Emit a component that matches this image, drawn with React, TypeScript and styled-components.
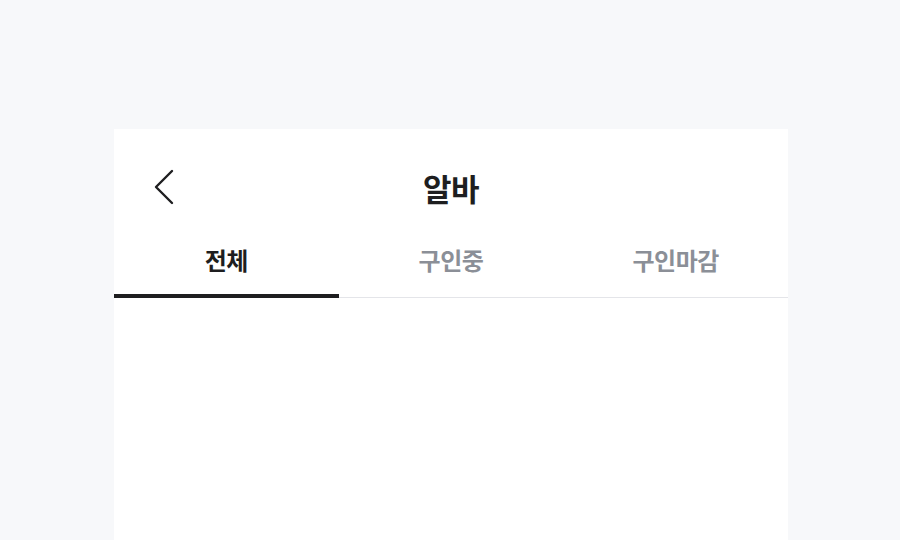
import React, { useState } from "react";
import styled, { createGlobalStyle } from "styled-components";

const Global = createGlobalStyle`
  html, body { margin: 0; padding: 0; background: #f7f8fa; }
  body { font-family: "Noto Sans CJK KR", "Noto Sans", sans-serif; overflow: hidden; }
`;

const Page = styled.div`
  display: flex;
  justify-content: center;
  padding-top: 129px;
  height: 540px;
  box-sizing: border-box;
`;

const Card = styled.div`
  width: 674px;
  margin-left: 2px;
  background: #ffffff;
  display: flex;
  flex-direction: column;
  flex: 0 0 auto;
  align-self: stretch;
`;

const Header = styled.div`
  position: relative;
  height: 72px;
  margin-top: 22px;
  display: flex;
  align-items: center;
  justify-content: center;
`;

const BackButton = styled.button`
  position: absolute;
  left: 32px;
  top: 50%;
  transform: translateY(-50%);
  width: 36px;
  height: 36px;
  border: none;
  background: none;
  padding: 0;
  display: flex;
  align-items: center;
  justify-content: center;
  cursor: pointer;
`;

const Title = styled.h1`
  margin: 0;
  font-size: 31px;
  font-weight: 700;
  color: #1e1e20;
  letter-spacing: -0.5px;
`;

const Tabs = styled.div`
  display: grid;
  grid-template-columns: repeat(3, 1fr);
  border-bottom: 1px solid #e4e5e9;
  margin-top: 2px;
`;

const Tab = styled.button<{ $active: boolean }>`
  position: relative;
  height: 72px;
  border: none;
  background: none;
  padding: 0 0 4px;
  font-family: inherit;
  font-size: 24px;
  font-weight: 700;
  letter-spacing: -0.5px;
  color: ${(p) => (p.$active ? "#1e1e20" : "#8b8f97")};
  cursor: pointer;
  &::after {
    content: "";
    position: absolute;
    left: 0;
    right: 0;
    bottom: -1px;
    height: 4px;
    background: ${(p) => (p.$active ? "#1e1e20" : "transparent")};
  }
`;

const tabs = ["전체", "구인중", "구인마감"];

export default function App() {
  const [active, setActive] = useState(0);
  return (
    <>
      <Global />
      <Page>
        <Card>
          <Header>
            <BackButton aria-label="뒤로">
              <svg width="36" height="36" viewBox="0 0 36 36" fill="none">
                <path d="M26 2 L10 18 L26 34" stroke="#1e1e20" strokeWidth="2.4" strokeLinecap="round" strokeLinejoin="round" />
              </svg>
            </BackButton>
            <Title>알바</Title>
          </Header>
          <Tabs>
            {tabs.map((t, i) => (
              <Tab key={t} $active={i === active} onClick={() => setActive(i)}>
                {t}
              </Tab>
            ))}
          </Tabs>
        </Card>
      </Page>
    </>
  );
}
